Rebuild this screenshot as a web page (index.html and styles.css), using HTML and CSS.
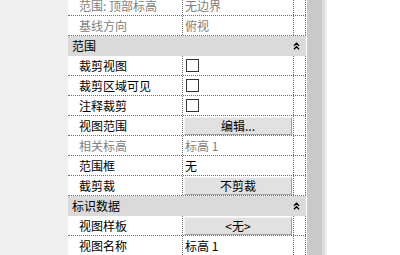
FILE: index.html
```html
<!DOCTYPE html>
<html lang="zh">
<head>
<meta charset="utf-8">
<link rel="stylesheet" href="styles.css">
</head>
<body>
<div class="pane">
  <div class="side"></div>
  <div class="grid">
    <div class="row dis"><div class="lab">范围: 顶部标高</div><div class="val">无边界</div><div class="ext"></div></div>
    <div class="row dis"><div class="lab">基线方向</div><div class="val">俯视</div><div class="ext"></div></div>
    <div class="head"><span>范围</span><svg class="chev" width="7" height="8" viewBox="0 0 7 8"><path d="M1 3.8 L3.5 1.2 L6 3.8 M1 7.3 L3.5 4.7 L6 7.3" fill="none" stroke="#000" stroke-width="1.3"/></svg></div>
    <div class="row"><div class="lab">裁剪视图</div><div class="val"><span class="box"></span></div><div class="ext"></div></div>
    <div class="row"><div class="lab">裁剪区域可见</div><div class="val"><span class="box"></span></div><div class="ext"></div></div>
    <div class="row"><div class="lab">注释裁剪</div><div class="val"><span class="box"></span></div><div class="ext"></div></div>
    <div class="row"><div class="lab">视图范围</div><div class="val btncell"><span class="btn">编辑...</span></div><div class="ext"></div></div>
    <div class="row dis"><div class="lab">相关标高</div><div class="val">标高 1</div><div class="ext"></div></div>
    <div class="row"><div class="lab">范围框</div><div class="val">无</div><div class="ext"></div></div>
    <div class="row"><div class="lab">截剪裁</div><div class="val btncell"><span class="btn">不剪裁</span></div><div class="ext"></div></div>
    <div class="head"><span>标识数据</span><svg class="chev" width="7" height="8" viewBox="0 0 7 8"><path d="M1 3.8 L3.5 1.2 L6 3.8 M1 7.3 L3.5 4.7 L6 7.3" fill="none" stroke="#000" stroke-width="1.3"/></svg></div>
    <div class="row"><div class="lab">视图样板</div><div class="val btncell"><span class="btn">&lt;无&gt;</span></div><div class="ext"></div></div>
    <div class="row"><div class="lab">视图名称</div><div class="val">标高 1</div><div class="ext"></div></div>
  </div>
  <div class="gap"></div>
  <div class="scroll">
    <div class="track"></div>
    <div class="edge1"></div>
    <div class="edge2"></div>
  </div>
  <div class="rest"></div>
</div>
</body>
</html>
```

FILE: styles.css
```css
html, body {
  margin: 0;
  padding: 0;
  background: #ffffff;
}
body {
  width: 400px;
  height: 255px;
  overflow: hidden;
  font-family: "Noto Sans CJK SC", "Noto Sans", sans-serif;
  font-size: 12px;
  color: #000;
}
.pane {
  display: flex;
  height: 255px;
  align-items: stretch;
}
.side {
  width: 68px;
  background: #f0f0f0;
  flex: none;
}
.grid {
  width: 238px;
  flex: none;
  margin-top: -4px;
  display: flex;
  flex-direction: column;
}
.row {
  display: grid;
  grid-template-columns: 115px 111px 12px;
  height: 20px;
  box-sizing: border-box;
  border-bottom: 1px dotted #6e6e6e;
  flex: none;
}
.row > div {
  border-right: 1px dotted #6e6e6e;
  box-sizing: border-box;
  height: 19px;
  line-height: 19px;
  white-space: nowrap;
  overflow: hidden;
}
.lab {
  padding-left: 11px;
}
.val {
  padding-left: 2px;
}
.dis {
  color: #808080;
}
.head {
  height: 20px;
  flex: none;
  background: #dadada;
  display: flex;
  align-items: center;
  justify-content: space-between;
  padding-left: 4px;
  padding-right: 6px;
  box-sizing: border-box;
  line-height: 20px;
}
.chev {
  display: block;
}
.box {
  display: block;
  width: 13px;
  height: 13px;
  box-sizing: border-box;
  border: 1px solid #333;
  background: #fff;
  margin-top: 3px;
  margin-left: 1px;
}
.btncell {
  padding: 1px 1px 0 1px;
}
.btn {
  display: block;
  height: 18px;
  box-sizing: border-box;
  background: #e1e1e1;
  border-style: solid;
  border-width: 1px;
  border-color: #f4f4f4 #a0a0a0 #a0a0a0 #f4f4f4;
  text-align: center;
  line-height: 16px;
}
.gap {
  width: 1px;
  flex: none;
  background: #ffffff;
}
.scroll {
  display: flex;
  flex: none;
}
.track {
  width: 15px;
  background: #c9c9c9;
}
.edge1 {
  width: 3px;
  background: #dcdcdc;
}
.edge2 {
  width: 2px;
  background: #efefef;
}
.rest {
  flex: 1;
  background: #ffffff;
}
```
